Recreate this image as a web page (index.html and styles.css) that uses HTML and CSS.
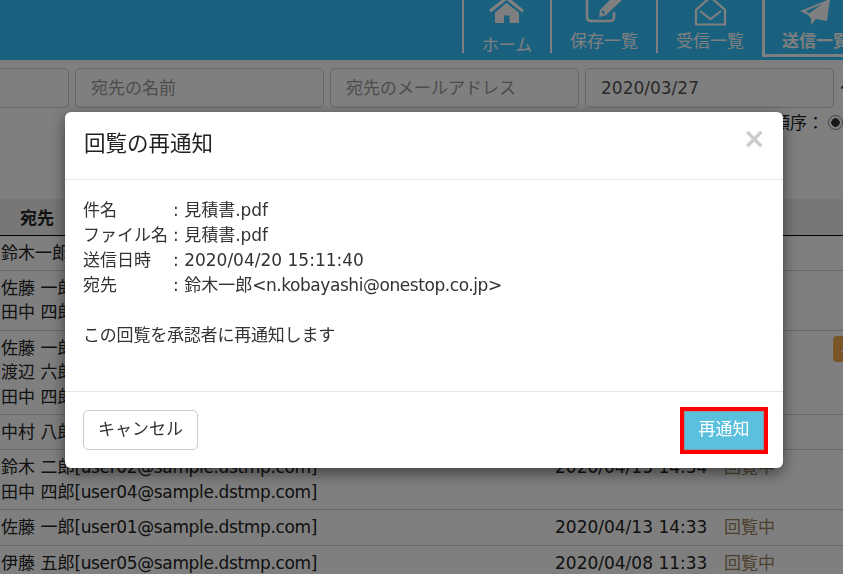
FILE: index.html
```html
<!DOCTYPE html>
<html lang="ja">
    <head>
        <meta charset="UTF-8">
        <meta name="viewport" content="width=device-width, initial-scale=1.0">
        <title>送信一覧</title>
        <link rel="stylesheet" href="styles.css">
    </head>
    <body>
        <header class="site-header">
            <nav class="tabs">
                <a class="tab tab-home">
                    <svg class="tab-icon" viewBox="0 0 40 26"><path d="M19.500 -4 L37 10 L35 12.500 L19.500 0 L4 12.500 L2 10 Z M8 12.500 L19.500 3 L32 12.500 V23 H22.500 V15.500 H17 V23 H8 Z" fill="currentColor"/></svg>
                    <span>ホーム</span>
                </a>
                <a class="tab">
                    <svg class="tab-icon" viewBox="0 0 40 26"><path d="M3 -2 V17 Q3 21 7 21 H26 Q30 21 30 17 V12" fill="none" stroke="currentColor" stroke-width="2.500"/><path d="M15 17 L16.200 9.700 L32 -6 L38 0 L21.800 15.300 Z" fill="currentColor"/><path d="M18 11 L20.500 13.500" stroke="#34c2ff" stroke-width="2"/></svg>
                    <span>保存一覧</span>
                </a>
                <a class="tab">
                    <svg class="tab-icon" viewBox="0 0 40 26"><path d="M6 24.500 V10 L20.500 -3 L35 10 V24.500 Z" fill="none" stroke="currentColor" stroke-width="2.200"/><path d="M10 11 L20.500 19 L31 11" fill="none" stroke="currentColor" stroke-width="2.200"/></svg>
                    <span>受信一覧</span>
                </a>
                <a class="tab tab-active">
                    <svg class="tab-icon" viewBox="0 0 40 26"><path fill-rule="evenodd" d="M35 -1 L5 11 L13 15 L16 18 L16 25 L21 19 L32 21 Z M11 11 L27 4 L14 13.500 Z" fill="currentColor"/></svg>
                    <span>送信一覧</span>
                </a>
            </nav>
        </header>

        <div class="filters">
            <input class="filter-input" type="text" placeholder="件名">
            <input class="filter-input" type="text" placeholder="宛先の名前">
            <input class="filter-input" type="text" placeholder="宛先のメールアドレス">
            <input class="filter-input" type="text" value="2020/03/27">
            <span class="filter-sep">～</span>
        </div>

        <div class="sort-row">
            <span>表示順序：</span>
            <input class="sort-radio" type="radio" name="sort" checked>
        </div>

        <table class="list-table">
            <thead>
                <tr>
                    <th class="col-to">宛先</th>
                    <th class="col-date">送信日時</th>
                    <th class="col-status">状態</th>
                    <th></th>
                </tr>
            </thead>
            <tbody>
                <tr>
                    <td>鈴木一郎<span class="addr">[n.kobayashi@onestop.co.jp]</span></td>
                    <td>2020/04/20 15:11</td>
                    <td class="status">回覧中</td>
                    <td></td>
                </tr>
                <tr>
                    <td>佐藤 一郎<span class="addr">[user01@sample.dstmp.com]</span><br>田中 四郎<span class="addr">[user04@sample.dstmp.com]</span></td>
                    <td>2020/04/15 10:20</td>
                    <td class="status">回覧中</td>
                    <td></td>
                </tr>
                <tr>
                    <td>佐藤 一郎<span class="addr">[user01@sample.dstmp.com]</span><br>渡辺 六郎<span class="addr">[user06@sample.dstmp.com]</span><br>田中 四郎<span class="addr">[user04@sample.dstmp.com]</span></td>
                    <td>2020/04/14 16:02</td>
                    <td class="status">回覧中</td>
                    <td><span class="badge">再通知</span></td>
                </tr>
                <tr>
                    <td>中村 八郎<span class="addr">[user08@sample.dstmp.com]</span></td>
                    <td>2020/04/14 09:41</td>
                    <td class="status">回覧中</td>
                    <td></td>
                </tr>
                <tr>
                    <td>鈴木 二郎<span class="addr">[user02@sample.dstmp.com]</span><br>田中 四郎<span class="addr">[user04@sample.dstmp.com]</span></td>
                    <td>2020/04/13 14:34</td>
                    <td class="status">回覧中</td>
                    <td></td>
                </tr>
                <tr>
                    <td>佐藤 一郎<span class="addr">[user01@sample.dstmp.com]</span></td>
                    <td>2020/04/13 14:33</td>
                    <td class="status">回覧中</td>
                    <td></td>
                </tr>
                <tr>
                    <td>伊藤 五郎<span class="addr">[user05@sample.dstmp.com]</span></td>
                    <td>2020/04/08 11:33</td>
                    <td class="status">回覧中</td>
                    <td></td>
                </tr>
            </tbody>
        </table>

        <div class="backdrop"></div>

        <div class="modal">
            <div class="modal-header">
                <h4 class="modal-title">回覧の再通知</h4>
                <button class="modal-close" type="button">&times;</button>
            </div>
            <div class="modal-body">
                <dl class="info">
                    <dt>件名</dt><dd>: 見積書.pdf</dd>
                    <dt>ファイル名</dt><dd>: 見積書.pdf</dd>
                    <dt>送信日時</dt><dd>: 2020/04/20 15:11:40</dd>
                    <dt>宛先</dt><dd>: 鈴木一郎<span class="addr">&lt;n.kobayashi@onestop.co.jp&gt;</span></dd>
                </dl>
                <p class="message">この回覧を承認者に再通知します</p>
            </div>
            <div class="modal-footer">
                <button class="btn btn-cancel" type="button">キャンセル</button>
                <button class="btn btn-notify" type="button">再通知</button>
            </div>
        </div>
    </body>
</html>
```

FILE: styles.css
```css
html, body {
    height: 100%;
}
body {
    margin: 0;
    overflow: hidden;
    background-color: #fff;
    color: #222;
    font-family: "DejaVu Sans", "Noto Sans CJK JP", sans-serif;
    font-size: 17px;
    line-height: 24.4px;
}
.addr {
    letter-spacing: -0.36px;
}
.site-header {
    height: 60px;
    background-color: #34c2ff;
    overflow: hidden;
}
.tabs {
    display: flex;
    padding-left: 462px;
    width: 600px;
}
.tab {
    display: flex;
    flex-direction: column;
    align-items: center;
    flex: none;
    box-sizing: border-box;
    width: 106px;
    height: 53px;
    border-left: 2px solid #fff;
    color: #fff;
}
.tab-home {
    width: 88px;
}
.tab-icon {
    flex: none;
    width: 40px;
    height: 26px;
}
.tab span {
    margin-top: 2px;
    white-space: nowrap;
    font-family: "Noto Sans CJK JP", sans-serif;
}
.tab-home span {
    margin-top: 6px;
}
.tab-active {
    height: 57px;
    width: 140px;
    border-left-width: 3px;
    border-bottom: 3px solid #fff;
    align-items: flex-start;
    padding-left: 17px;
}
.tab-active span {
    font-weight: 700;
}
.tab-active .tab-icon {
    margin-left: 13px;
}

.filters {
    display: flex;
    gap: 6px;
    margin-top: 8px;
    margin-left: -180px;
    width: 1200px;
    align-items: center;
}
.filter-input {
    flex: none;
    box-sizing: border-box;
    width: 249px;
    height: 40px;
    padding: 0 15px;
    border: 1px solid #ccc;
    border-radius: 5px;
    background-color: #fff;
    color: #555;
    font-family: inherit;
    font-size: 17px;
}
.filter-input::placeholder {
    color: #999;
    opacity: 1;
    font-family: "Noto Sans CJK JP", sans-serif;
}
.filter-sep {
    flex: none;
}

.sort-row {
    display: flex;
    align-items: center;
    justify-content: flex-end;
    gap: 4px;
    height: 26px;
    margin: 1px 0 0;
    font-family: "Noto Sans CJK JP", sans-serif;
}
.sort-radio {
    appearance: none;
    flex: none;
    box-sizing: border-box;
    width: 15px;
    height: 15px;
    margin: 0;
    border: 1px solid #888;
    border-radius: 50%;
    background: radial-gradient(circle, #333 0 4px, #fff 4.500px);
}

.list-table {
    table-layout: fixed;
    border-collapse: collapse;
    width: 1000px;
    margin-top: 64px;
}
.list-table th {
    height: 36px;
    box-sizing: border-box;
    padding: 0 0 0 20px;
    background-color: #eee;
    border-bottom: 1px solid #000;
    text-align: left;
    font-family: "Noto Sans CJK JP", sans-serif;
}
.list-table td {
    padding: 5px 0 5px 1px;
    border-bottom: 1px solid #ccc;
    vertical-align: top;
    white-space: nowrap;
}
.list-table .col-to {
    width: 554px;
}
.list-table .col-date {
    width: 169px;
}
.list-table .col-status {
    width: 109px;
}
.list-table .status {
    color: #9a7f5c;
}
.badge {
    display: inline-block;
    height: 26px;
    padding: 0 8px;
    border-radius: 4px;
    background-color: #f0ad4e;
    color: #fff;
    font-size: 14px;
    line-height: 26px;
}

.backdrop {
    position: fixed;
    inset: 0;
    background-color: rgba(0, 0, 0, 0.5);
}
.modal {
    position: fixed;
    top: 112px;
    left: 65px;
    display: flex;
    flex-direction: column;
    box-sizing: border-box;
    width: 718px;
    height: 356px;
    border-radius: 6px;
    background-color: #fff;
    box-shadow: 0 5px 15px rgba(0, 0, 0, 0.5);
    color: #333;
}
.modal-header {
    display: flex;
    align-items: center;
    justify-content: space-between;
    box-sizing: border-box;
    height: 68px;
    padding: 0 17px 7px 19px;
    border-bottom: 1px solid #e5e5e5;
}
.modal-title {
    margin: 0;
    font-family: "Noto Sans CJK JP", sans-serif;
    font-size: 21.500px;
    font-weight: 400;
    color: #222;
}
.modal-close {
    padding: 0 0 6px;
    border: none;
    background: none;
    color: #ccc;
    font-family: "DejaVu Sans", sans-serif;
    font-size: 28px;
    font-weight: 700;
    line-height: 1;
}
.modal-body {
    flex: 1;
    padding: 18px 18px 0;
}
.info {
    display: grid;
    grid-template-columns: 90px 1fr;
    margin: 0;
    line-height: 25px;
}
.info dt, .info dd {
    margin: 0;
}
.info .addr {
    letter-spacing: -0.44px;
}
.message {
    margin: 25px 0 0;
    line-height: 25px;
    letter-spacing: -0.2px;
}
.modal-footer {
    display: flex;
    align-items: center;
    justify-content: space-between;
    box-sizing: border-box;
    height: 77px;
    padding: 0 19px 0 18px;
    border-top: 1px solid #e5e5e5;
}
.btn {
    box-sizing: border-box;
    height: 40px;
    padding: 0 0 5px;
    border-radius: 5px;
    font-family: "Noto Sans CJK JP", sans-serif;
    font-size: 17px;
}
.btn-cancel {
    width: 115px;
    border: 1px solid #ccc;
    background-color: #fff;
    color: #333;
}
.btn-notify {
    width: 80px;
    height: 39px;
    border: 1px solid #8a9ba5;
    border-radius: 0;
    background-color: #5bc0de;
    color: #fff;
    outline: 4px solid #f00;
}
```
